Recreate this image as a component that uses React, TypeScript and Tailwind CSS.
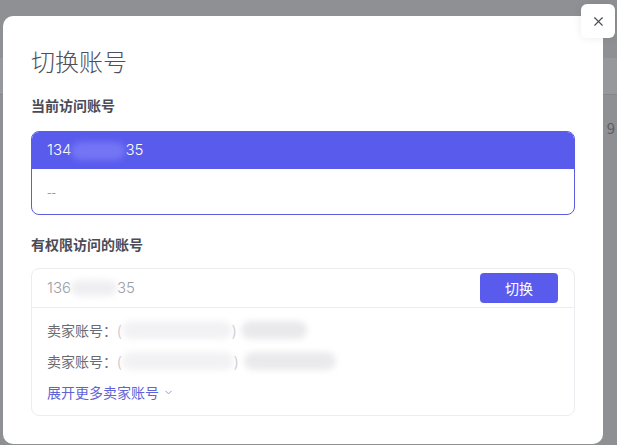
import { X, ChevronDown } from "lucide-react";

const cjk = { fontFamily: '"Noto Sans CJK SC", "Noto Sans", sans-serif' };
const num = { fontFamily: 'Inter, "Noto Sans CJK SC", sans-serif' };

function Blob({ className }: { className: string }) {
  return <span className={`inline-block rounded-full blur-[3px] ${className}`} />;
}

export default function App() {
  return (
    <div className="relative h-[445px] w-full overflow-hidden bg-[#8e9093]" style={cjk}>
      {/* page behind the overlay */}
      <div className="pt-[58px]">
        <div className="h-[37px] border-b border-[#85878a] bg-[#96989b]" />
        <div className="flex justify-between px-[2px] pt-[22px] text-[15px] text-[#5c5e62]">
          <span className="text-[#4e4246]">1</span>
          <span>9</span>
        </div>
      </div>

      {/* modal */}
      <div className="absolute left-[3px] top-[16px] h-[428px] w-[600px] rounded-[10px] bg-white px-[28px] pt-[29px]">
        <h2 className="text-[24px] font-light leading-[32px] text-[#50505c]">切换账号</h2>

        <p className="mt-[18px] text-[14px] font-bold leading-[20px] text-[#4b4b57]">当前访问账号</p>

        <div className="mt-[16px] overflow-hidden rounded-[8px] border border-[#5b5ce0]">
          <div className="flex h-[37px] items-center bg-[#595bed] px-[15px] text-[15px] text-white" style={num}>
            <span className="font-light">134</span>
            <Blob className="h-[18px] w-[54px] bg-[#7475f5]" />
            <span className="font-light">35</span>
          </div>
          <div className="flex h-[45px] items-center px-[15px] text-[13px] text-[#9a9aa2]">--</div>
        </div>

        <p className="mt-[19px] text-[14px] font-bold leading-[20px] text-[#4b4b57]">有权限访问的账号</p>

        <div className="mt-[14px] rounded-[8px] border border-[#ececf1]">
          <div className="flex h-[39px] items-center justify-between border-b border-[#ececf1] pl-[15px] pr-[16px]">
            <div className="flex items-center text-[15px] text-[#9d9da5]" style={num}>
              <span className="font-light">136</span>
              <Blob className="h-[16px] w-[46px] bg-[#efeff2]" />
              <span className="font-light">35</span>
            </div>
            <button className="flex h-[30px] w-[78px] items-center justify-center rounded-[4px] bg-[#595bed] text-[14px] text-white">
              切换
            </button>
          </div>

          <div className="flex flex-col gap-[11px] px-[15px] pb-[13px] pt-[12px] text-[14px] leading-[20px]">
            <div className="flex h-[20px] items-center text-[#6a6a72]">
              <span>卖家账号：</span>
              <span className="text-[#c4c4ca]">(</span>
              <Blob className="h-[18px] w-[110px] bg-[#f2f2f4]" />
              <span className="text-[#c4c4ca]">)</span>
              <Blob className="ml-[5px] h-[18px] w-[66px] bg-[#e9e9ec]" />
            </div>
            <div className="flex h-[20px] items-center text-[#6a6a72]">
              <span>卖家账号：</span>
              <span className="text-[#c4c4ca]">(</span>
              <Blob className="h-[18px] w-[112px] bg-[#f2f2f4]" />
              <span className="text-[#c4c4ca]">)</span>
              <Blob className="ml-[6px] h-[18px] w-[92px] bg-[#eaeaed]" />
            </div>
            <button className="flex h-[20px] items-center gap-[4px] text-[14px] text-[#6063d8]">
              展开更多卖家账号
              <ChevronDown size={11} strokeWidth={2} className="text-[#8a8ce0]" />
            </button>
          </div>
        </div>
      </div>

      {/* close button */}
      <button className="absolute left-[581px] top-[4px] flex h-[34px] w-[34px] items-center justify-center rounded-[6px] bg-white shadow-[0_0_10px_rgba(0,0,0,0.08)]">
        <X size={15} strokeWidth={1.8} className="text-[#4a4a55]" />
      </button>
    </div>
  );
}
